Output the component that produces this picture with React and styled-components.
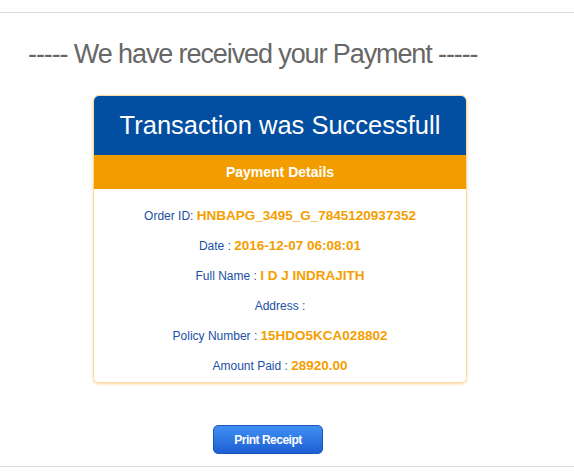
import React from "react";
import styled, { createGlobalStyle } from "styled-components";

const Global = createGlobalStyle`
  html, body { margin: 0; padding: 0; background: #fff; }
  body { font-family: "Liberation Sans", Arial, sans-serif; }
`;

const Page = styled.div`
  margin-top: 12px;
  border-top: 1px solid #dcdcdc;
  border-bottom: 1px solid #dcdcdc;
  display: flex;
  flex-direction: column;
  align-items: flex-start;
  padding-bottom: 12px;
`;

const Heading = styled.h1`
  margin: 25px 0 0 28px;
  font-size: 27px;
  letter-spacing: -1.1px;
  line-height: 32px;
  font-weight: normal;
  color: #676767;
  white-space: nowrap;
`;

const Card = styled.div`
  margin: 25px 0 0 93px;
  width: 372px;
  border: 1px solid #fbdca6;
  border-radius: 6px;
  box-shadow: 0 1px 3px rgba(243, 160, 20, 0.45);
  overflow: hidden;
  text-align: center;
`;

const Title = styled.div`
  background: #024ea1;
  color: #fff;
  height: 59px;
  display: flex;
  align-items: center;
  justify-content: center;
  font-size: 25.5px;
`;

const SubTitle = styled.div`
  background: #f39c00;
  color: #fff;
  height: 34px;
  display: flex;
  align-items: center;
  justify-content: center;
  font-size: 14px;
  font-weight: bold;
`;

const Body = styled.div`
  padding: 12px 0 1px;
  background: #fff;
`;

const Row = styled.div`
  line-height: 30px;
  height: 30px;
  font-size: 12px;
  color: #1a50a5;
`;

const Value = styled.span`
  font-size: 13.5px;
  font-weight: bold;
  color: #f59e00;
`;

const Button = styled.button`
  margin: 42px 0 0 213px;
  width: 110px;
  height: 29px;
  border: 1px solid #1b55be;
  border-radius: 5px;
  background: linear-gradient(#3f90f2, #1f5fd3);
  color: #fff;
  font-family: "Liberation Sans", Arial, sans-serif;
  font-size: 12px;
  letter-spacing: -0.5px;
  font-weight: bold;
  cursor: pointer;
  padding: 0;
`;

const rows = [
  ["Order ID: ", "HNBAPG_3495_G_7845120937352"],
  ["Date : ", "2016-12-07 06:08:01"],
  ["Full Name : ", "I D J INDRAJITH"],
  ["Address : ", ""],
  ["Policy Number : ", "15HDO5KCA028802"],
  ["Amount Paid : ", "28920.00"],
];

export default function App() {
  return (
    <>
      <Global />
      <Page>
        <Heading>----- We have received your Payment -----</Heading>
        <Card>
          <Title>Transaction was Successfull</Title>
          <SubTitle>Payment Details</SubTitle>
          <Body>
            {rows.map(([label, value]) => (
              <Row key={label}>
                {label}
                <Value>{value}</Value>
              </Row>
            ))}
          </Body>
        </Card>
        <Button>Print Receipt</Button>
      </Page>
    </>
  );
}
